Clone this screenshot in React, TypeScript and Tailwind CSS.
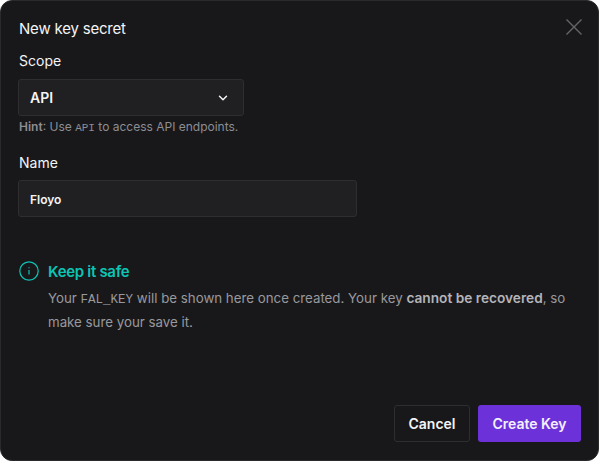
import { ChevronDown } from "lucide-react";

export default function App() {
  return (
    <div className="h-[462px] w-[600px] bg-white font-['Inter',sans-serif]">
      <div className="relative flex h-[461px] w-[599px] flex-col rounded-[12px] border border-[#2a2a2d] bg-[#18181b] pl-[17px] pr-[17px]">
        <svg className="absolute right-[15px] top-[17px] h-[18px] w-[18px] text-[#66666a]" viewBox="0 0 18 18" fill="none" stroke="currentColor" strokeWidth="1.4">
          <path d="M1.5 1.5 16.5 16.5M16.5 1.5 1.5 16.5" />
        </svg>
        <h2 className="mt-[17px] pl-px text-[15px] leading-[22px] font-normal tracking-[-0.2px] text-[#f4f4f5]">New key secret</h2>
        <label className="mt-[10px] pl-px text-[14px] leading-[22px] text-[#f4f4f5]">Scope</label>
        <div className="mt-[7px] flex h-[37px] w-[226px] items-center justify-between rounded-[3px] border border-[#2e2e31] bg-[#202023] pl-[11px] pr-[13px]">
          <span className="text-[14px] font-semibold text-[#f4f4f5]">API</span>
          <ChevronDown className="h-[14px] w-[14px] text-[#f4f4f5]" strokeWidth={2.5} />
        </div>
        <p className="mt-[2px] pl-px text-[12px] leading-[18px] text-[#8d8d92]">
          <span className="font-semibold">Hint</span>: Use <span className="font-['Liberation_Mono',monospace] text-[11px]">API</span> to access API endpoints.
        </p>
        <label className="mt-[15px] pl-px text-[14px] leading-[22px] text-[#f4f4f5]">Name</label>
        <div className="mt-[6px] flex h-[37px] w-[339px] items-center rounded-[3px] border border-[#2e2e31] bg-[#202023] pl-[11px] pt-[2px]">
          <span className="text-[12px] font-semibold text-[#f4f4f5]">Floyo</span>
        </div>
        <div className="mt-[44px] flex gap-[9px] pl-px">
          <svg className="h-[20px] w-[20px] shrink-0 text-[#0cc4b4]" viewBox="0 0 20 20" fill="none" stroke="currentColor" strokeWidth="1.2">
            <circle cx="10" cy="10" r="9.2" />
            <path d="M10 9v4.5M10 6.2v1" />
          </svg>
          <div className="min-w-0">
            <h3 className="text-[15px] leading-[22px] font-semibold tracking-[-0.3px] text-[#0cc4b4]">Keep it safe</h3>
            <p className="mt-[4px] w-[530px] text-[13.3px] leading-[22px] text-[#98989d]">
              Your <span className="font-['Liberation_Mono',monospace] text-[12.5px]">FAL_KEY</span> will be shown here once created. Your key <span className="text-[13.7px] font-semibold text-[#b4b4b8]">cannot be recovered</span>, so make sure your save it.
            </p>
          </div>
        </div>
        <div className="mt-auto mb-[18px] flex justify-end gap-[8px]">
          <button className="h-[37px] w-[76px] rounded-[3px] border border-[#2e2e31] text-[14px] font-semibold text-[#f4f4f5]">Cancel</button>
          <button className="h-[37px] w-[103px] rounded-[3px] bg-[#6d31d9] text-[14px] font-semibold text-[#f4f0ff]">Create Key</button>
        </div>
      </div>
    </div>
  );
}
